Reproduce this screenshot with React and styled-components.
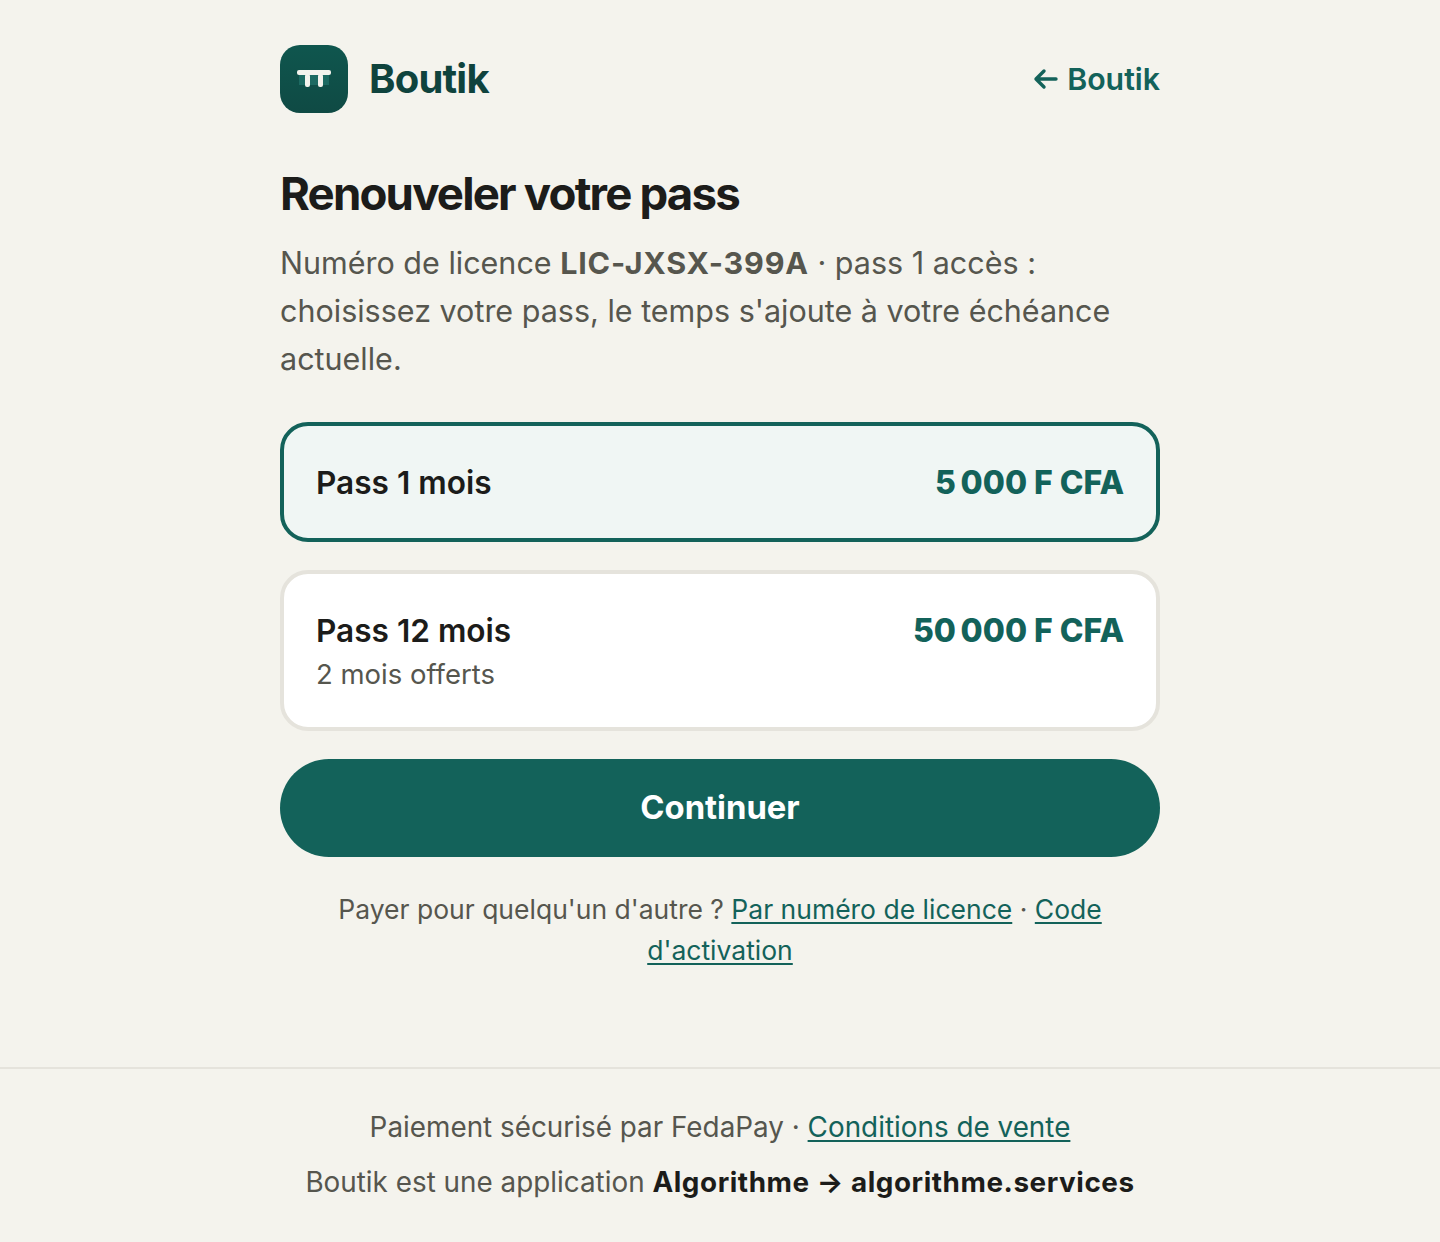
import styled, { createGlobalStyle } from 'styled-components';

const GlobalStyle = createGlobalStyle`
  * { box-sizing: border-box; }
  body {
    margin: 0;
    background: #f4f3ed;
    font-family: Inter, "Liberation Sans", sans-serif;
    color: #1c1c1a;
  }
`
const Page = styled.div`
  min-height: 1242px;
  display: flex;
  flex-direction: column;
`
const Main = styled.main`
  width: 880px;
  margin: 0 auto;
  padding-top: 45px;
  height: 1067px;
`
const Header = styled.header`
  display: flex;
  justify-content: space-between;
  align-items: center;
  height: 68px;
  margin-bottom: 55px;
`
const Brand = styled.div`
  display: flex;
  align-items: center;
  gap: 21px;
`
const LogoBox = styled.div`
  width: 68px;
  height: 68px;
  border-radius: 20px;
  background: linear-gradient(180deg, #0f564e 0%, #0f4a44 100%);
  display: flex;
  align-items: center;
  justify-content: center;
`
const BrandName = styled.span`
  font-size: 40px;
  font-weight: 700;
  letter-spacing: -0.8px;
  color: #0f433d;
  padding-bottom: 2px;
`
const BackLink = styled.a`
  font-size: 30.3px;
  font-weight: 600;
  color: #13625a;
  display: flex;
  align-items: center;
  gap: 9px;
`
const Title = styled.h1`
  margin: 0;
  font-size: 45.6px;
  line-height: 52px;
  font-weight: 700;
  letter-spacing: -1.82px;
  color: #1c1c1a;
`
const Lead = styled.p`
  margin: 19px 0 39px;
  font-size: 30.5px;
  line-height: 48px;
  color: #56564e;
  strong { font-weight: 700; letter-spacing: 0.8px; }
`
const Plans = styled.div`
  display: flex;
  flex-direction: column;
  gap: 28px;
`
const Plan = styled.div`
  display: flex;
  justify-content: space-between;
  align-items: flex-start;
  padding: 33px 32px 31px;
  border-radius: 28px;
  border: 4px solid ${p => (p.$selected ? '#13625a' : '#e5e3dc')};
  background: ${p => (p.$selected ? '#f0f6f4' : '#ffffff')};
`
const PlanName = styled.div`
  font-size: 31.6px;
  line-height: 48px;
  font-weight: 600;
  color: #1c1c1a;
`
const PlanNote = styled.div`
  font-size: 27.5px;
  line-height: 39px;
  padding-bottom: 2px;
  color: #56564e;
`
const Price = styled.div`
  font-size: 32px;
  line-height: 48px;
  font-weight: 800;
  color: #13625a;
`
const Button = styled.button`
  display: block;
  width: 100%;
  height: 98px;
  margin-top: 28px;
  padding: 0 0 2px;
  border: 0;
  border-radius: 49px;
  background: #13625a;
  color: #ffffff;
  font-family: inherit;
  font-size: 32.8px;
  font-weight: 700;
`
const Alt = styled.p`
  margin: 32px 0 0;
  font-size: 26.5px;
  line-height: 41px;
  text-align: center;
  color: #56564e;
`
const Link = styled.a`
  color: #13625a;
  text-decoration: underline;
  text-underline-offset: 3px;
  text-decoration-thickness: 2px;
`
const Footer = styled.footer`
  border-top: 2px solid #e5e3dc;
  padding-top: 31px;
  text-align: center;
  font-size: 27.85px;
  line-height: 55px;
  color: #56564e;
  strong { font-weight: 700; letter-spacing: 0.55px; color: #1c1c1a; }
`

const LogoMark = () => (
  <svg width="34" height="20" viewBox="0 0 34 20">
    <rect x="2" y="3" width="30" height="13" fill="#1d6a62" />
    <rect x="0" y="1" width="34" height="5" rx="2" fill="#f4f3ed" />
    <rect x="8" y="5" width="5" height="13" rx="2" fill="#f4f3ed" />
    <rect x="21" y="5" width="5" height="13" rx="2" fill="#f4f3ed" />
  </svg>
)

const ArrowLeft = () => (
  <svg width="26" height="24" viewBox="0 0 26 24" fill="none" stroke="#13625a" strokeWidth="3.4" strokeLinecap="round" strokeLinejoin="round">
    <path d="M24 12H4M12 4l-8 8 8 8" />
  </svg>
)

export default function App() {
  return (
    <Page>
      <GlobalStyle />
      <Main>
        <Header>
          <Brand>
            <LogoBox><LogoMark /></LogoBox>
            <BrandName>Boutik</BrandName>
          </Brand>
          <BackLink><ArrowLeft />Boutik</BackLink>
        </Header>
        <Title>Renouveler votre pass</Title>
        <Lead>
          Numéro de licence <strong>LIC-JXSX-399A</strong> · pass 1 accès : choisissez votre pass, le temps s'ajoute à votre échéance actuelle.
        </Lead>
        <Plans>
          <Plan $selected>
            <PlanName>Pass 1 mois</PlanName>
            <Price>5{'\u202f'}000 F CFA</Price>
          </Plan>
          <Plan>
            <div>
              <PlanName>Pass 12 mois</PlanName>
              <PlanNote>2 mois offerts</PlanNote>
            </div>
            <Price>50{'\u202f'}000 F CFA</Price>
          </Plan>
        </Plans>
        <Button>Continuer</Button>
        <Alt>
          Payer pour quelqu'un d'autre ? <Link>Par numéro de licence</Link> · <Link>Code d'activation</Link>
        </Alt>
      </Main>
      <Footer>
        <div>Paiement sécurisé par FedaPay · <Link>Conditions de vente</Link></div>
        <div>Boutik est une application <strong>Algorithme → algorithme.services</strong></div>
      </Footer>
    </Page>
  )
}
